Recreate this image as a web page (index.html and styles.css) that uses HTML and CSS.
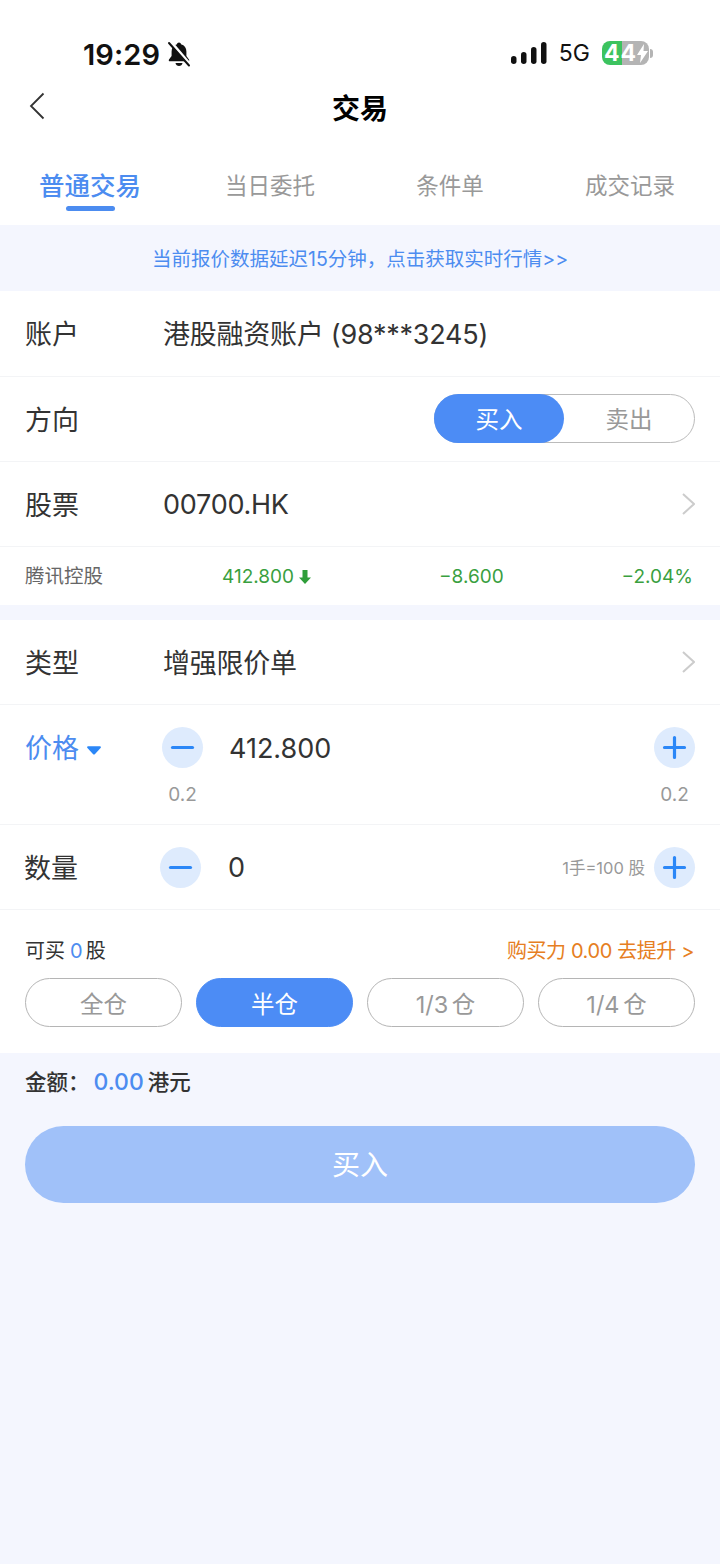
FILE: index.html
```html
<!DOCTYPE html>
<html lang="zh">
<head>
    <meta charset="utf-8">
    <meta name="viewport" content="width=device-width, initial-scale=1.0">
    <title>交易</title>
    <link rel="stylesheet" href="styles.css">
</head>
<body>
    <!-- Status bar -->
    <div class="status">
        <div class="status-left">
            <span class="clock">19:29</span>
            <svg class="bell" width="24" height="26" viewBox="0 0 24 26">
                <path d="M12 1.500c1.100 0 1.900.8 2 1.800 3.600.9 5.400 3.700 5.400 7.300v4.400l2.600 3.500c.6.900.1 1.800-.9 1.800H2.900c-1 0-1.500-.9-.9-1.800L4.600 15v-4.400c0-3.600 1.800-6.400 5.400-7.300.1-1 .9-1.800 2-1.800z" fill="#111"/>
                <path d="M8.500 22h7c-.3 1.700-1.700 3-3.500 3s-3.200-1.300-3.500-3z" fill="#111"/>
                <path d="M3.500 0.500 23.500 24" stroke="#fff" stroke-width="3"/>
                <path d="M2 2 22 24.500" stroke="#111" stroke-width="2" stroke-linecap="round"/>
            </svg>
        </div>
        <div class="status-right">
            <svg width="36" height="22" viewBox="0 0 36 22">
                <rect x="0" y="14" width="5.500" height="8" rx="2.750" fill="#111"/>
                <rect x="10" y="10" width="5.500" height="12" rx="2.750" fill="#111"/>
                <rect x="20" y="5" width="5.500" height="17" rx="2.750" fill="#111"/>
                <rect x="30" y="0" width="5.500" height="22" rx="2.750" fill="#111"/>
            </svg>
            <span class="net">5G</span>
            <div class="battery">
                <span>44</span>
                <svg width="11" height="19" viewBox="0 0 11 19"><path d="M7 0 0 11h4l-1 8 8-12H6.500z" fill="#fff"/></svg>
            </div>
            <div class="battery-nub"></div>
        </div>
    </div>

    <!-- Nav -->
    <div class="nav">
        <svg class="back" width="18" height="28" viewBox="0 0 18 28">
            <path d="M15.500 1.500 3 14l12.500 12.500" fill="none" stroke="#333" stroke-width="1.800"/>
        </svg>
        <h1>交易</h1>
    </div>

    <div class="tabs">
        <div class="tab tab-on">普通交易<i></i></div>
        <div class="tab">当日委托</div>
        <div class="tab">条件单</div>
        <div class="tab">成交记录</div>
    </div>

    <div class="notice">当前报价数据延迟15分钟，点击获取实时行情&gt;&gt;</div>

    <!-- Account block -->
    <div class="card">
        <div class="row row-account">
            <span class="label">账户</span>
            <span class="value">港股融资账户 (98***3245)</span>
        </div>
        <div class="row">
            <span class="label">方向</span>
            <div class="toggle">
                <span class="toggle-on">买入</span>
                <span class="toggle-off">卖出</span>
            </div>
        </div>
        <div class="row">
            <span class="label">股票</span>
            <span class="value value-code">00700.HK</span>
            <svg class="chev" width="16" height="24" viewBox="0 0 16 24"><path d="M4 2 15 12 4 22" fill="none" stroke="#ccc" stroke-width="2"/></svg>
        </div>
        <div class="quote">
            <span class="quote-name">腾讯控股</span>
            <span class="quote-price">412.800
                <svg width="12" height="14" viewBox="0 0 12 14"><path d="M3.500 0h5v7.500H12l-6 6.500-6-6.500h3.500z" fill="#2f9e3a"/></svg>
            </span>
            <span class="quote-change">−8.600</span>
            <span class="quote-pct">−2.04%</span>
        </div>
    </div>

    <!-- Order block -->
    <div class="card card-order">
        <div class="row">
            <span class="label">类型</span>
            <span class="value">增强限价单</span>
            <svg class="chev" width="16" height="24" viewBox="0 0 16 24"><path d="M4 2 15 12 4 22" fill="none" stroke="#ccc" stroke-width="2"/></svg>
        </div>
        <div class="row row-price">
            <span class="label label-blue">价格<svg width="14" height="9" viewBox="0 0 16 10"><path d="M1.500 0h13c1.200 0 1.800 1.200 1 2.100L9.200 9a1.700 1.700 0 0 1-2.400 0L.5 2.100C-.3 1.200.3 0 1.500 0z" fill="#2b87f7"/></svg></span>
            <div class="stepper">
                <button class="round"><svg width="27" height="27" viewBox="0 0 27 27"><path d="M3.500 13.500h20" stroke="#2b87f7" stroke-width="3.200" stroke-linecap="round"/></svg></button>
                <span class="step">0.2</span>
            </div>
            <span class="num">412.800</span>
            <div class="stepper">
                <button class="round"><svg width="27" height="27" viewBox="0 0 27 27"><path d="M3.500 13.500h20M13.500 3.500v20" stroke="#2b87f7" stroke-width="3.200" stroke-linecap="round"/></svg></button>
                <span class="step">0.2</span>
            </div>
        </div>
        <div class="row row-qty">
            <span class="label">数量</span>
            <button class="round"><svg width="27" height="27" viewBox="0 0 27 27"><path d="M3.500 13.500h20" stroke="#2b87f7" stroke-width="3.200" stroke-linecap="round"/></svg></button>
            <span class="num">0</span>
            <span class="lot">1手=100 股</span>
            <button class="round"><svg width="27" height="27" viewBox="0 0 27 27"><path d="M3.500 13.500h20M13.500 3.500v20" stroke="#2b87f7" stroke-width="3.200" stroke-linecap="round"/></svg></button>
        </div>
        <div class="buy-box">
            <div class="buy-info">
                <span class="can-buy">可买<b>0</b>股</span>
                <span class="power">购买力 0.00 去提升 &gt;</span>
            </div>
            <div class="chips">
                <span class="chip">全仓</span>
                <span class="chip chip-on">半仓</span>
                <span class="chip">1/3 仓</span>
                <span class="chip">1/4 仓</span>
            </div>
        </div>
    </div>

    <div class="amount">金额：<b>0.00</b>港元</div>
    <button class="submit">买入</button>
</body>
</html>
```

FILE: styles.css
```css
* {
    box-sizing: border-box;
}
body {
    margin: 0;
    height: 1564px;
    overflow: hidden;
    background: #f4f6fe;
    color: #333;
    font-family: Inter, "Noto Sans CJK SC", sans-serif;
}
button {
    border: 0;
    padding: 0;
    font-family: inherit;
}

.status {
    height: 80px;
    padding: 28px 67px 0 83px;
    background: #fff;
    display: flex;
    align-items: center;
    justify-content: space-between;
    color: #111;
}
.status-left {
    display: flex;
    align-items: center;
    gap: 7px;
}
.clock {
    font-size: 29px;
    font-weight: 600;
    letter-spacing: 0.1px;
}
.status-right {
    display: flex;
    align-items: center;
    margin-bottom: 2px;
}
.net {
    font-size: 23px;
    margin: 0 12px;
}
.battery {
    width: 47px;
    height: 24px;
    border-radius: 8px;
    background: linear-gradient(90deg, #3cc35f 0 20px, #b4b4b4 20px);
    display: flex;
    align-items: center;
    padding-left: 2px;
    color: #fff;
    font-size: 23px;
    font-weight: 700;
}
.battery span {
    letter-spacing: 1px;
}
.battery-nub {
    width: 3px;
    height: 9px;
    margin-left: 1px;
    border-radius: 0 3px 3px 0;
    background: #b4b4b4;
}

.nav {
    height: 56px;
    padding-bottom: 2px;
    background: #fff;
    position: relative;
    display: flex;
    align-items: center;
    justify-content: center;
}
.nav h1 {
    margin: 0;
    font-size: 28px;
    font-weight: 700;
    color: #000;
}
.back {
    position: absolute;
    left: 28px;
    top: 12px;
}

.tabs {
    height: 89px;
    background: #fff;
    display: grid;
    grid-template-columns: repeat(4, 1fr);
    padding-top: 33px;
}
.tab {
    display: flex;
    flex-direction: column;
    align-items: center;
    font-size: 22.500px;
    line-height: 34px;
    color: #999;
}
.tab-on {
    font-size: 25.500px;
    font-weight: 500;
    color: #4c8cf0;
}
.tab-on i {
    width: 49px;
    height: 5px;
    margin-top: 3px;
    border-radius: 3px;
    background: #4c8cf0;
}

.notice {
    height: 66px;
    padding-bottom: 2px;
    display: flex;
    align-items: center;
    justify-content: center;
    font-size: 19.500px;
    color: #4c8cf0;
}

.card {
    background: #fff;
}
.card-order {
    margin-top: 15px;
}
.row {
    height: 85px;
    padding: 0 25px;
    display: flex;
    align-items: center;
    border-bottom: 1px solid #f3f4f6;
}
.row-account {
    height: 86px;
}
.label {
    width: 138px;
    flex: none;
    margin-top: -2px;
    font-size: 27px;
}
.label-blue {
    color: #4c8cf0;
}
.label-blue svg {
    margin-left: 8px;
    vertical-align: 3px;
}
.value {
    margin-top: -2px;
    font-size: 27px;
    letter-spacing: -0.25px;
}
.value-code {
    margin-top: 0;
}
.chev {
    margin-left: auto;
}

.toggle {
    margin: -2px 0 0 auto;
    width: 261px;
    height: 49px;
    border: 1px solid #bbb;
    border-radius: 25px;
    display: flex;
    align-items: center;
    font-size: 23.500px;
}
.toggle-on {
    width: 130px;
    height: 49px;
    margin: -1px 0 -1px -1px;
    border-radius: 25px;
    background: #4c8cf5;
    color: #fff;
    display: flex;
    align-items: center;
    justify-content: center;
}
.toggle-off {
    flex: 1;
    text-align: center;
    color: #999;
}

.quote {
    height: 58px;
    padding: 0 27px 0 25px;
    display: grid;
    grid-template-columns: 197px 217px 1fr auto;
    align-items: center;
    font-size: 19px;
    color: #3a9f3f;
}
.quote-name {
    margin-top: -3px;
    color: #666;
    font-size: 19.500px;
}
.quote-price svg {
    vertical-align: -1px;
}

.row-price {
    height: 120px;
    padding-top: 22px;
    align-items: flex-start;
}
.stepper {
    width: 41px;
    display: flex;
    flex-direction: column;
    align-items: center;
}
.stepper:last-child {
    margin-left: auto;
}
.row-price .label {
    width: 137px;
    margin-top: 1px;
    line-height: 41px;
}
.row-price .num {
    line-height: 41px;
}
.round {
    width: 41px;
    height: 41px;
    flex: none;
    border-radius: 50%;
    background: #deebfd;
    display: flex;
    align-items: center;
    justify-content: center;
}
.step {
    margin-top: 15px;
    font-size: 19px;
    color: #999;
}
.num {
    margin-left: 26px;
    padding-top: 1px;
    font-size: 27px;
}
.row-qty {
    padding-left: 24px;
}
.row-qty .label {
    width: 136px;
}
.row-qty .num {
    margin-left: 27px;
}
.lot {
    margin-left: auto;
    margin-right: 9px;
    font-size: 16.500px;
    color: #999;
}

.buy-box {
    height: 143px;
    padding: 26px 25px 0;
}
.buy-info {
    display: flex;
    justify-content: space-between;
    align-items: center;
    height: 28px;
    font-size: 20px;
}
.can-buy {
    margin-top: -2px;
}
.can-buy b {
    margin: 0 3px 0 5px;
    font-weight: 400;
    color: #4c8cf0;
}
.power {
    margin: -2px 1px 0 0;
    letter-spacing: -0.4px;
    color: #e67e22;
}
.chips {
    margin-top: 14px;
    display: grid;
    grid-template-columns: repeat(4, 1fr);
    gap: 14px;
}
.chip {
    height: 49px;
    border: 1px solid #b5b5b5;
    border-radius: 25px;
    display: flex;
    align-items: center;
    justify-content: center;
    font-size: 23.500px;
    word-spacing: -3px;
    color: #999;
}
.chip-on {
    border-color: #4c8cf5;
    background: #4c8cf5;
    color: #fff;
}

.amount {
    height: 73px;
    padding: 15px 25px 0;
    font-size: 21.500px;
    line-height: 28px;
    font-weight: 500;
}
.amount b {
    margin: 0 4px 0 4px;
    font-weight: 500;
    font-size: 23px;
    color: #4c8cf0;
}
.submit {
    display: block;
    width: 670px;
    height: 77px;
    margin: 0 25px;
    padding-bottom: 3px;
    border-radius: 39px;
    background: #a0c1f9;
    color: #fff;
    font-size: 28px;
}
```
